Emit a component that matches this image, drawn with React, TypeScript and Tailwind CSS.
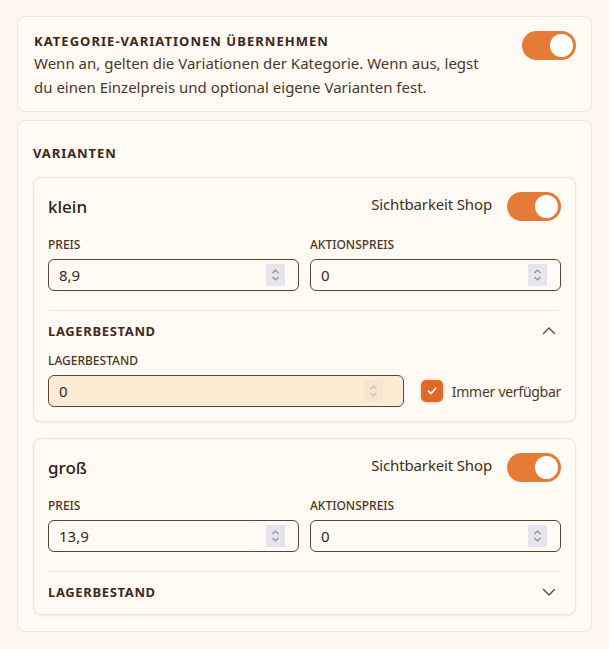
import { useState } from 'react'

const FONT = { fontFamily: '"Noto Sans", "Open Sans", sans-serif' }

type Variant = {
  name: string
  price: string
  salePrice: string
  visible: boolean
  stockOpen: boolean
  stock: string
  alwaysAvailable: boolean
}

const INITIAL_VARIANTS: Variant[] = [
  { name: 'klein', price: '8,9', salePrice: '0', visible: true, stockOpen: true, stock: '0', alwaysAvailable: true },
  { name: 'groß', price: '13,9', salePrice: '0', visible: true, stockOpen: false, stock: '0', alwaysAvailable: true },
]

function Toggle({ on, onChange }: { on: boolean; onChange: () => void }) {
  return (
    <button
      type="button"
      onClick={onChange}
      className={`flex h-[29px] w-[54px] shrink-0 items-center rounded-full px-[3px] transition-colors ${
        on ? 'justify-end bg-[#e57b36]' : 'justify-start bg-[#d9cbb8]'
      }`}
    >
      <span className="h-[23px] w-[23px] rounded-full bg-white" />
    </button>
  )
}

function Spinner({ faded }: { faded?: boolean }) {
  return (
    <span
      className={`flex h-[22px] w-[19px] flex-col items-center justify-center ${
        faded ? 'bg-[#f7e6cf] text-[#c9bfb8]' : 'bg-[#e7e5ec] text-[#8e8a96]'
      }`}
    >
      <svg width="9" height="14" viewBox="0 0 9 14" fill="none" stroke="currentColor" strokeWidth="1.2">
        <path d="M1.5 5 L4.5 2 L7.5 5" />
        <path d="M1.5 9 L4.5 12 L7.5 9" />
      </svg>
    </span>
  )
}

function NumberField({ label, value, highlight }: { label: string; value: string; highlight?: boolean }) {
  return (
    <div className="min-w-0">
      <div className="mb-1.5 text-[12px] font-medium leading-4 text-[#4a3528]">{label}</div>
      <div
        className={`flex h-8 items-center justify-between rounded-md border border-[#5b4536] pl-[10px] pr-[13px] ${
          highlight ? 'bg-[#fdecd4]' : 'bg-[#fffaf3]'
        }`}
      >
        <span className="text-[15px] text-[#3a281d]">{value}</span>
        <Spinner faded={highlight} />
      </div>
    </div>
  )
}

function Chevron({ up }: { up: boolean }) {
  return (
    <svg width="16" height="16" viewBox="0 0 16 16" fill="none" stroke="#5a4a40" strokeWidth="1.4" strokeLinecap="round" strokeLinejoin="round">
      {up ? <path d="M2.5 10.5 L8 5 L13.5 10.5" /> : <path d="M2.5 5.5 L8 11 L13.5 5.5" />}
    </svg>
  )
}

function VariantCard({ variant, onUpdate }: { variant: Variant; onUpdate: (v: Variant) => void }) {
  return (
    <div className="rounded-lg border border-[#f1e4d2] bg-[#fffaf3] px-[14px] pb-[14px] pt-[14px] shadow-[0_1px_2px_rgba(160,120,80,0.12)]">
      {/* Name + shop visibility */}
      <div className="flex items-center justify-between">
        <span className="text-[17px] font-medium text-[#2f2118]">{variant.name}</span>
        <div className="flex items-center gap-[15px]">
          <span className="-mt-1 text-[15px] tracking-[-0.01em] text-[#3f2d22]">Sichtbarkeit Shop</span>
          <Toggle on={variant.visible} onChange={() => onUpdate({ ...variant, visible: !variant.visible })} />
        </div>
      </div>

      {/* Prices */}
      <div className="mt-4 grid grid-cols-2 gap-[11px]">
        <NumberField label="PREIS" value={variant.price} />
        <NumberField label="AKTIONSPREIS" value={variant.salePrice} />
      </div>

      {/* Stock section */}
      <div className="mt-[19px] border-t border-[#f1e4d2]">
        <button
          type="button"
          onClick={() => onUpdate({ ...variant, stockOpen: !variant.stockOpen })}
          className="flex w-full items-center justify-between pt-3 pr-[4px]"
        >
          <span className="text-[13px] font-bold leading-4 tracking-[0.05em] text-[#3f2a1e]">LAGERBESTAND</span>
          <Chevron up={variant.stockOpen} />
        </button>

        {variant.stockOpen && (
          <div className="mt-[14px]">
            <div className="mb-[6px] text-[12px] font-medium leading-4 text-[#4a3528]">LAGERBESTAND</div>
            <div className="flex items-center">
              <div className="flex h-8 flex-1 items-center justify-between rounded-md border border-[#5b4536] bg-[#fdecd4] pl-[10px] pr-[20px]">
                <span className="text-[15px] text-[#3a281d]">{variant.stock}</span>
                <Spinner faded />
              </div>
              <label className="ml-[17px] flex items-center gap-[9px]">
                <button
                  type="button"
                  onClick={() => onUpdate({ ...variant, alwaysAvailable: !variant.alwaysAvailable })}
                  className="flex h-[22px] w-[22px] items-center justify-center rounded-[5px] bg-[#e0692a] shadow-[0_0_3px_rgba(224,105,42,0.45)]"
                >
                  {variant.alwaysAvailable && (
                    <svg width="12" height="12" viewBox="0 0 12 12" fill="none" stroke="white" strokeWidth="1.8" strokeLinecap="round" strokeLinejoin="round">
                      <path d="M2.5 6.2 L5 8.5 L9.5 3.5" />
                    </svg>
                  )}
                </button>
                <span className="text-[14px] tracking-[-0.02em] text-[#4a382c]">Immer verfügbar</span>
              </label>
            </div>
          </div>
        )}
      </div>
    </div>
  )
}

export default function App() {
  const [inheritCategory, setInheritCategory] = useState(true)
  const [variants, setVariants] = useState<Variant[]>(INITIAL_VARIANTS)

  const updateVariant = (index: number, v: Variant) => {
    setVariants(prev => prev.map((item, i) => (i === index ? v : item)))
  }

  return (
    <div className="min-h-screen bg-[#fef8f0] px-[17px] pb-4 pt-4" style={FONT}>
      {/* Category inheritance */}
      <div className="flex items-start justify-between rounded-lg border border-[#f2e6d6] bg-[#fffaf3] pb-[12px] pl-4 pr-[15px] pt-[14px]">
        <div>
          <div className="text-[13px] font-bold leading-[20px] tracking-[0.08em] text-[#3d271b]">
            KATEGORIE-VARIATIONEN ÜBERNEHMEN
          </div>
          <p className="max-w-[460px] text-[15px] leading-6 text-[#4a382d]">
            Wenn an, gelten die Variationen der Kategorie. Wenn aus, legst du einen Einzelpreis und optional eigene Varianten fest.
          </p>
        </div>
        <Toggle on={inheritCategory} onChange={() => setInheritCategory(!inheritCategory)} />
      </div>

      {/* Variants */}
      <div className="mt-2 rounded-lg border border-[#f2e6d6] bg-[#fffaf3] px-[15px] pb-4 pt-5">
        <div className="mb-3 text-[13px] font-bold leading-6 tracking-[0.07em] text-[#3d271b]">VARIANTEN</div>
        <div className="flex flex-col gap-4">
          {variants.map((v, i) => (
            <VariantCard key={v.name} variant={v} onUpdate={nv => updateVariant(i, nv)} />
          ))}
        </div>
      </div>
    </div>
  )
}
